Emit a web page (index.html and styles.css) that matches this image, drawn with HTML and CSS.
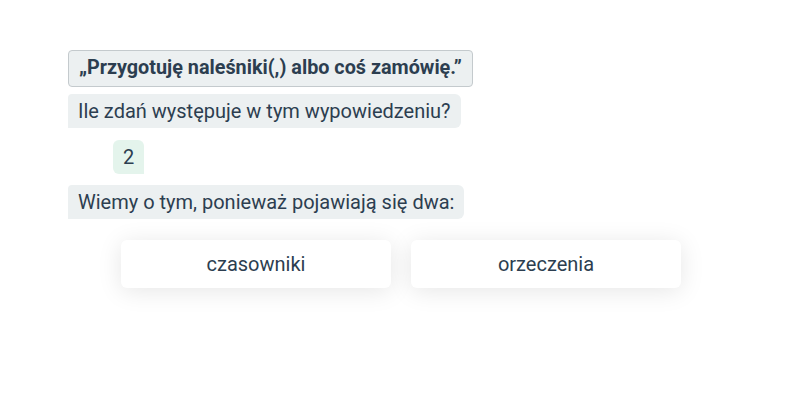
FILE: index.html
```html
<!DOCTYPE html>
<html lang="pl">
<head>
<meta charset="utf-8">
<link rel="stylesheet" href="styles.css">
</head>
<body>
<div class="chat">
  <div class="bubble quote">„Przygotuję naleśniki(,) albo coś zamówię.”</div>
  <div class="bubble bot">Ile zdań występuje w tym wypowiedzeniu?</div>
  <div class="answer-row"><div class="bubble answer">2</div></div>
  <div class="bubble bot">Wiemy o tym, ponieważ pojawiają się dwa:</div>
  <div class="options">
    <button class="option">czasowniki</button>
    <button class="option">orzeczenia</button>
  </div>
</div>
</body>
</html>
```

FILE: styles.css
```css
html, body {
  margin: 0;
  padding: 0;
  background: #ffffff;
}
body {
  font-family: Roboto, "Noto Sans", sans-serif;
  color: #2c3e50;
  width: 800px;
  height: 400px;
  overflow: hidden;
}
.chat {
  display: flex;
  flex-direction: column;
  align-items: flex-start;
  gap: 7px;
  padding: 50px 0 0 68px;
}
.bubble {
  font-size: 20px;
  line-height: 24px;
  padding: 5px 10px;
  background: #ecf0f1;
  border-radius: 4px 6px 6px 0;
}
.quote {
  font-weight: 700;
  font-size: 19.8px;
  padding: 5px 10px 6px;
  border: 1px solid #c4cacd;
  border-radius: 4px;
}
.answer-row {
  padding: 5px 0 4px 45px;
}
.answer {
  background: #e4f4ec;
  border-radius: 6px 6px 0 6px;
}
.options {
  display: flex;
  gap: 20px;
  padding: 14px 0 0 53px;
}
.option {
  width: 270px;
  height: 48px;
  border: none;
  background: #ffffff;
  border-radius: 6px;
  box-shadow: 0 3px 24px rgba(0, 0, 0, 0.1);
  font-family: Roboto, sans-serif;
  font-size: 20px;
  color: #2c3e50;
}
```
